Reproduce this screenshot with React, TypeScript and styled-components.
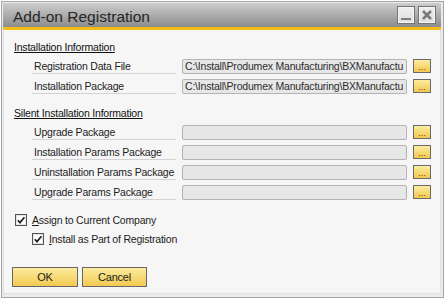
import React from "react";
import styled, { createGlobalStyle } from "styled-components";

const GlobalStyle = createGlobalStyle`
  html, body {
    margin: 0;
    padding: 0;
    background: #ffffff;
  }
  body {
    font-family: "Liberation Sans", Arial, sans-serif;
  }
`;

const Window = styled.div`
  box-sizing: border-box;
  margin: 1px 0 0 1px;
  width: 443px;
  height: 297px;
  border: 1px solid #a4a4a4;
  background: #ebebeb;
  padding: 1px 2px 3px 1px;
  display: flex;
  flex-direction: column;
`;

const TitleBar = styled.div`
  height: 24px;
  display: flex;
  align-items: center;
  padding: 0 5px 0 10px;
  background: linear-gradient(#cdcdcd, #8c8c8c);
  border-bottom: 3px solid #f6bd16;
`;

const Title = styled.div`
  flex: 1;
  font-size: 15.5px;
  color: #262626;
  padding-top: 3px;
`;

const TitleButton = styled.div`
  box-sizing: border-box;
  width: 18px;
  height: 18px;
  margin-left: 3px;
  border: 1px solid #737373;
  box-shadow: inset 0 0 0 1px #f6f6f6;
  background: linear-gradient(#eeeeee, #dedede);
  display: flex;
  align-items: center;
  justify-content: center;
`;

const MinBar = styled.div`
  width: 10px;
  height: 2px;
  background: #7c7c7c;
  margin-top: 8px;
`;

const Panel = styled.div`
  flex: 1;
  background: #f6f6f6;
  border: 1px solid #e2e2e2;
  border-top: none;
  padding: 10px 0 0 10px;
  display: flex;
  flex-direction: column;
  font-size: 10.5px;
  letter-spacing: -0.2px;
  color: #1c1c1c;
`;

const SectionTitle = styled.div<{ $gap: number }>`
  height: 14px;
  line-height: 15px;
  margin-top: ${(p) => p.$gap}px;
  text-decoration: underline;
  color: #111;
`;

const Row = styled.div<{ $first?: boolean }>`
  height: 20px;
  margin-top: ${(p) => (p.$first ? 2 : 0)}px;
  padding-left: 18px;
  display: flex;
  align-items: center;
`;

const Label = styled.div`
  box-sizing: border-box;
  width: 144px;
  height: 15px;
  padding-left: 2px;
  border-bottom: 1px solid #d2d2d2;
  line-height: 15px;
  white-space: nowrap;
`;

const Field = styled.div`
  box-sizing: border-box;
  width: 225px;
  height: 15px;
  margin-left: 6px;
  border: 1px solid #b3b3b3;
  border-radius: 2px;
  background: #e7e7e7;
  padding: 0 0 0 2px;
  line-height: 13px;
  white-space: nowrap;
  overflow: hidden;
  color: #2c2c2c;
`;

const Browse = styled.div`
  box-sizing: border-box;
  width: 18px;
  height: 14px;
  margin-left: 6px;
  border: 1px solid #6a6a6a;
  background: linear-gradient(#fcec9f, #f0c94e);
  color: #a3231b;
  font-size: 9px;
  letter-spacing: 0;
  line-height: 14px;
  text-align: center;
`;

const CheckRow = styled.label<{ $indent: number; $gap: number }>`
  height: 14px;
  margin-top: ${(p) => p.$gap}px;
  padding-left: ${(p) => p.$indent}px;
  display: flex;
  align-items: center;
  gap: 5px;
  font-size: 10.5px;
`;

const Box = styled.span`
  box-sizing: border-box;
  width: 12px;
  height: 12px;
  border: 1px solid #545454;
  background: #ffffff;
  box-shadow: inset 0 0 0 1px #e4e4e4;
  display: flex;
  align-items: center;
  justify-content: center;
`;

const ButtonBar = styled.div`
  margin: 21px 0 0 -2px;
  display: flex;
  gap: 4px;
`;

const Button = styled.div<{ $w: number }>`
  box-sizing: border-box;
  width: ${(p) => p.$w}px;
  height: 20px;
  border: 1px solid #676767;
  background: linear-gradient(#fcec9f, #f1c94f);
  font-size: 11px;
  line-height: 18px;
  text-align: center;
  color: #222;
`;

const fileRows = [
  { label: "Registration Data File", value: "C:\\Install\\Produmex Manufacturing\\BXManufactu" },
  { label: "Installation Package", value: "C:\\Install\\Produmex Manufacturing\\BXManufactu" },
];

const silentRows = [
  "Upgrade Package",
  "Installation Params Package",
  "Uninstallation Params Package",
  "Upgrade Params Package",
];

function Tick() {
  return (
    <svg width="10" height="10" viewBox="0 0 10 10">
      <path d="M1.8 5.2 L4 7.6 L8.4 2.2" fill="none" stroke="#1e1e1e" strokeWidth="1.7" />
    </svg>
  );
}

export default function App() {
  return (
    <>
      <GlobalStyle />
      <Window>
        <TitleBar>
          <Title>Add-on Registration</Title>
          <TitleButton>
            <MinBar />
          </TitleButton>
          <TitleButton>
            <svg width="10" height="10" viewBox="0 0 10 10">
              <path d="M1 1 L9 9 M9 1 L1 9" stroke="#7a7a7a" strokeWidth="2.6" />
            </svg>
          </TitleButton>
        </TitleBar>
        <Panel>
          <SectionTitle $gap={0}>Installation Information</SectionTitle>
          {fileRows.map((r, i) => (
            <Row key={r.label} $first={i === 0}>
              <Label>{r.label}</Label>
              <Field>{r.value}</Field>
              <Browse>...</Browse>
            </Row>
          ))}
          <SectionTitle $gap={10}>Silent Installation Information</SectionTitle>
          {silentRows.map((label, i) => (
            <Row key={label} $first={i === 0}>
              <Label>{label}</Label>
              <Field />
              <Browse>...</Browse>
            </Row>
          ))}
          <CheckRow $indent={1} $gap={11}>
            <Box>
              <Tick />
            </Box>
            <span>
              <u>A</u>ssign to Current Company
            </span>
          </CheckRow>
          <CheckRow $indent={18} $gap={5}>
            <Box>
              <Tick />
            </Box>
            <span>
              <u>I</u>nstall as Part of Registration
            </span>
          </CheckRow>
          <ButtonBar>
            <Button $w={66}>OK</Button>
            <Button $w={65}>Cancel</Button>
          </ButtonBar>
        </Panel>
      </Window>
    </>
  );
}
